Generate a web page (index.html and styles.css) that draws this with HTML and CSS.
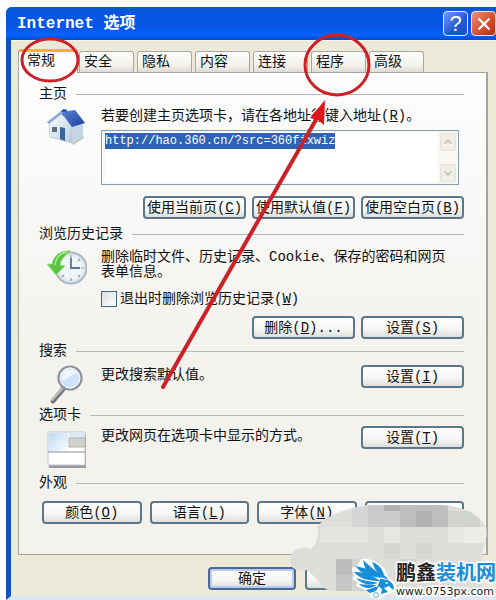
FILE: index.html
```html
<!DOCTYPE html>
<html lang="zh-CN">
<head>
    <meta charset="UTF-8">
    <meta name="viewport" content="width=device-width, initial-scale=1.0">
    <title>Internet 选项</title>
    <link rel="stylesheet" href="styles.css">
</head>
<body>
    <div class="window">
        <div class="titlebar">
            <h1>Internet 选项</h1>
            <button class="title-button help" aria-label="帮助">?</button>
            <button class="title-button close" aria-label="关闭">
                <svg width="14" height="14" viewBox="0 0 14 14"><path d="M1.5 1.5l11 11M12.5 1.5l-11 11" stroke="#fff" stroke-width="2.4"/></svg>
            </button>
        </div>

        <div class="content">
            <div class="tabs">
                <button class="tab active">常规</button>
                <button class="tab">安全</button>
                <button class="tab">隐私</button>
                <button class="tab">内容</button>
                <button class="tab">连接</button>
                <button class="tab">程序</button>
                <button class="tab">高级</button>
            </div>

            <div class="panel">
                <!-- Home page -->
                <h2>主页</h2>
                <div class="row">
                    <div class="icon">
                        <svg width="40" height="38" viewBox="0 0 40 38">
                            <defs>
                                <linearGradient id="roof" x1="0" y1="0" x2="1" y2="1">
                                    <stop offset="0" stop-color="#5b86dc"/>
                                    <stop offset="1" stop-color="#1a3c9c"/>
                                </linearGradient>
                                <linearGradient id="wall" x1="0" y1="0" x2="1" y2="1">
                                    <stop offset="0" stop-color="#ffffff"/>
                                    <stop offset="1" stop-color="#b9cbdd"/>
                                </linearGradient>
                            </defs>
                            <path d="M14 3l3-2 3 1v6h-6z" fill="#27499b"/>
                            <path d="M2 15L14 5l11 14v16L3 29z" fill="url(#wall)" stroke="#a9b8c8" stroke-width=".6"/>
                            <path d="M25 18l11-2v12l-11 7z" fill="#c6d5e3"/>
                            <path d="M14 4l14-2 10 13-13 4z" fill="url(#roof)"/>
                            <path d="M0 14L14 3l2 2L2 16z" fill="#8ea9d2"/>
                            <path d="M13 19l5 1v13l-5-2z" fill="#3b6498"/>
                            <path d="M5 19h5v5H5z" fill="#5a6f83"/>
                            <path d="M25 35l11-7 1 2-11 7z" fill="#bccbb9"/>
                        </svg>
                    </div>
                    <div class="fields">
                        <label for="homepage">若要创建主页选项卡，请在各地址行键入地址(<u>R</u>)。</label>
                        <div class="address">
                            <textarea id="homepage" spellcheck="false">http://hao.360.cn/?src=360fixwiz</textarea>
                            <div class="scrollbar">
                                <svg viewBox="0 0 16 16"><path d="M4 10l4-4 4 4" fill="none" stroke="#c4c3b8" stroke-width="2"/></svg>
                                <svg viewBox="0 0 16 16"><path d="M4 6l4 4 4-4" fill="none" stroke="#c4c3b8" stroke-width="2"/></svg>
                            </div>
                        </div>
                        <div class="actions">
                            <button class="button">使用当前页(<u>C</u>)</button>
                            <button class="button">使用默认值(<u>F</u>)</button>
                            <button class="button">使用空白页(<u>B</u>)</button>
                        </div>
                    </div>
                </div>

                <!-- History -->
                <h2>浏览历史记录</h2>
                <div class="row history">
                    <div class="icon">
                        <svg width="40" height="36" viewBox="0 0 40 36">
                            <circle cx="24" cy="18" r="15.5" fill="#dfe8ef" stroke="#aeb7bd" stroke-width="2"/>
                            <circle cx="24" cy="18" r="12" fill="#eef4f8"/>
                            <path d="M24 5v3M37 18h-3M24 31v-3M33 9l-2 2M33 27l-2-2M15 27l2-2" stroke="#8c98a4" stroke-width="1.2"/>
                            <path d="M24 8v10h9" fill="none" stroke="#5f7389" stroke-width="1.8"/>
                            <path d="M24 1C14 0 7 5 5 14H0l9 11 9-9-5-1c1-6 5-10 11-14z" fill="#58c63c" stroke="#a3dd92" stroke-width=".8"/>
                            <path d="M20 2C13 3 9 8 8 15" fill="none" stroke="#a5ea8d" stroke-width="1.5"/>
                        </svg>
                    </div>
                    <div class="fields">
                        <p>删除临时文件、历史记录、Cookie、保存的密码和网页表单信息。</p>
                        <label class="check"><input type="checkbox">退出时删除浏览历史记录(<u>W</u>)</label>
                        <div class="actions">
                            <button class="button">删除(<u>D</u>)...</button>
                            <button class="button">设置(<u>S</u>)</button>
                        </div>
                    </div>
                </div>

                <!-- Search -->
                <h2>搜索</h2>
                <div class="row short">
                    <div class="icon">
                        <svg width="40" height="40" viewBox="0 0 40 40">
                            <path d="M17 23L6 36" stroke="#77777a" stroke-width="5" stroke-linecap="round"/>
                            <path d="M16 23L5 35" stroke="#c2c2c5" stroke-width="2" stroke-linecap="round"/>
                            <circle cx="23" cy="13" r="11.5" fill="#cfe4fb" stroke="#8d929a" stroke-width="2.2"/>
                            <circle cx="23" cy="13" r="9.8" fill="none" stroke="#eef5fc" stroke-width="1.2"/>
                            <path d="M15 15c6-1 9-5 15-7-3-5-13-5-15 2z" fill="#edf6ff"/>
                        </svg>
                    </div>
                    <p>更改搜索默认值。</p>
                    <button class="button">设置(<u>I</u>)</button>
                </div>

                <!-- Tabs -->
                <h2>选项卡</h2>
                <div class="row short last">
                    <div class="icon">
                        <svg width="40" height="42" viewBox="0 -4 40 42">
                            <defs>
                                <linearGradient id="page" x1="0" y1="0" x2="1" y2="1">
                                    <stop offset="0" stop-color="#bcd8f7"/>
                                    <stop offset="1" stop-color="#ffffff"/>
                                </linearGradient>
                            </defs>
                            <path d="M2 4h37v34H2z" fill="#9b9b9b"/>
                            <path d="M1 2h37v33H1z" fill="#fff" stroke="#c3c7cd"/>
                            <path d="M2 3h19v19H2z" fill="url(#page)"/>
                            <path d="M22 3h16v5H22z" fill="#dbe9f7"/>
                            <path d="M22 8h16v9H22z" fill="#d1d1cd" stroke="#b4b4b1"/>
                            <path d="M1 22h37" stroke="#8e939b"/>
                        </svg>
                    </div>
                    <p>更改网页在选项卡中显示的方式。</p>
                    <button class="button">设置(<u>T</u>)</button>
                </div>

                <!-- Appearance -->
                <h2>外观</h2>
                <div class="appearance">
                    <button class="button">颜色(<u>O</u>)</button>
                    <button class="button">语言(<u>L</u>)</button>
                    <button class="button">字体(<u>N</u>)</button>
                    <button class="button">辅助功能(<u>E</u>)</button>
                </div>
            </div>

            <div class="footer">
                <button class="button default">确定</button>
                <button class="button">取消</button>
            </div>
        </div>

        <!-- Red marks over the tabs -->
        <svg class="marks" width="400" height="400" viewBox="0 0 400 400">
            <g fill="none" stroke="#cb2127">
                <ellipse cx="50" cy="60" rx="28" ry="21" stroke-width="3"/>
                <ellipse cx="337" cy="65" rx="32" ry="30" stroke-width="3"/>
                <path d="M163 387L317 118" stroke-width="4" stroke-linecap="round"/>
            </g>
            <path d="M325 100l-15 18 8 2 6 5z" fill="#e0161c"/>
        </svg>

        <!-- Mosaic and site logo -->
        <svg class="mosaic" width="208" height="98" viewBox="288 502 208 98">
            <defs>
                <clipPath id="cloud">
                    <path d="M316 527Q328 515 346 510T372 505H440C462 506 478 513 486 527Q488 540 482 552V591H330Q321 588 319 581L307 570Q297 572 292 567Q287 556 295 550Q303 546 311 549Q319 542 318 530z"/>
                </clipPath>
            </defs>
            <g clip-path="url(#cloud)">
                <path d="M288 502h208v98H288z" fill="#dddeda"/>
                <path d="M352 502h16v25h-16z" fill="#d3d6d4"/>
                <path d="M368 502h16v25h-16z" fill="#c9cbc9"/>
                <path d="M384 502h16v9h-16z" fill="#aeb1af"/>
                <path d="M384 511h16v16h-16z" fill="#cccdcb"/>
                <path d="M400 502h48v25h-48z" fill="#bdbfbd"/>
                <path d="M416 511h16v16h-16z" fill="#afb2b0"/>
                <path d="M448 511h32v16h-32z" fill="#d1d3cf"/>
                <path d="M320 527h48v16h-48z" fill="#e5e5e2"/>
                <path d="M384 527h16v16h-16zM448 527h16v16h-16z" fill="#e6e6e3"/>
                <path d="M464 527h32v16h-32z" fill="#ecece9"/>
                <path d="M384 543h16v16h-16zM416 543h16v16h-16z" fill="#d5d7d2"/>
                <path d="M400 559h16v16h-16z" fill="#d0d1cd"/>
                <path d="M336 559h16v16h-16z" fill="#bcbcba"/>
                <path d="M336 575h16v16h-16z" fill="#c6c6c4"/>
                <path d="M352 559h16v32h-16z" fill="#d2d4d1"/>
            </g>
        </svg>
        <div class="logo">
            <svg width="44" height="40" viewBox="0 0 44 40">
                <path d="M11 0l12 4 8 6 5 10 7 6-1 6-8 2-8 5-6-2-2-6-12-5 3-2-7-5 3-1-4-8 4-1z" fill="#fff" stroke="#fff" stroke-width="3" stroke-linejoin="round"/>
                <g fill="#178ed6">
                    <path d="M11 1l9 8 8 6 2 4-9-3-8-7z"/>
                    <path d="M20 3c6 2 10 6 12 13l5 5-8-3-6-8z"/>
                    <path d="M3 7l13 3 13 9-11-2-9-4z"/>
                    <path d="M2 13c9 0 17 2 26 9-11 0-20-2-26-9z"/>
                    <path d="M4 19c8 3 14 3 22 5-8 3-17 1-22-5z"/>
                    <path d="M7 25c6 1 10 0 17 1-4 4-12 4-17-1z"/>
                    <path d="M14 31c5-1 8-3 13-4l-3 5-6 2z"/>
                    <path d="M28 20c7 0 12 2 14 8l-1 3-4-4-5 2 4 4-7 2 1-5-4-3z"/>
                </g>
                <path d="M33 23l4 1-3 1z" fill="#fff"/>
                <circle cx="24" cy="36" r="2.5" fill="none" stroke="#5ab3e4"/>
            </svg>
            <div class="logo-text">
                <div class="logo-name">鹏鑫<span>装机网</span></div>
                <div class="logo-url">www.0753px.com</div>
            </div>
        </div>
    </div>
</body>
</html>
```
FILE: styles.css
```css
* {
    margin: 0;
    padding: 0;
    box-sizing: border-box;
}

body {
    background-color: #fff;
    padding: 7px 0 0 6px;
    overflow: hidden;
}

body, button, textarea {
    font-family: 'Liberation Mono', 'Noto Sans CJK SC', monospace;
    font-size: 14px;
    line-height: 16px;
    color: #111;
}

.window {
    background-color: #ece9d8;
    border-left: 5px solid #1450c0;
    border-bottom: 4px solid #dce6f8;
    border-top-left-radius: 6px;
}

.titlebar {
    height: 33px;
    margin-left: -5px;
    padding-left: 11px;
    display: flex;
    align-items: center;
    gap: 3px;
    background: linear-gradient(#0a56cc, #0457e2 20%, #0554e4 60%, #0763ff 85%, #0349cc);
    border-top-left-radius: 6px;
    overflow: hidden;
}

h1 {
    flex: 1;
    color: #fff;
    font-size: 16px;
    line-height: 24px;
}

.title-button {
    width: 25px;
    height: 25px;
    display: flex;
    justify-content: center;
    align-items: center;
    border: 1px solid #dfe9fb;
    border-radius: 4px;
}

.help {
    background: linear-gradient(135deg, #6f9bf3, #2258d5 60%, #1c4fc4);
    color: #fff;
    font: 22px 'Liberation Sans', sans-serif;
}

.close {
    background: linear-gradient(135deg, #eb9377, #d9482a 60%, #b62c10);
}

.content {
    padding: 8px 8px 6px 7px;
    border-top: 1px solid #f8f6ee;
}

.tabs {
    display: flex;
    align-items: flex-end;
    gap: 3px;
}

.tab {
    width: 55px;
    height: 21px;
    padding-left: 4px;
    text-align: left;
    border: 1px solid #a5a9a5;
    border-bottom: none;
    border-radius: 3px 3px 0 0;
    background: linear-gradient(#fff, #f1f0ea 70%, #dedcd2);
}

.tab.active {
    position: relative;
    width: 60px;
    height: 24px;
    padding: 0 0 3px 8px;
    margin: 0 -2px -1px 0;
    border-top: 3px solid #f0b040;
    background: #fdfdfe;
}

.panel {
    padding: 13px 22px 30px 20px;
    border: 1px solid #a3a59f;
    border-right-width: 2px;
    background: linear-gradient(#fdfdfe, #f3f2ed 60%);
}

h2 {
    display: flex;
    align-items: center;
    gap: 9px;
    font-size: 14px;
    font-weight: normal;
    line-height: 16px;
}

h2::after {
    content: '';
    flex: 1;
    height: 1px;
    background-color: #b5b7b3;
}

.row {
    display: flex;
    align-items: flex-start;
    padding: 6px 0 7px;
}

.icon {
    width: 62px;
    padding-left: 8px;
    flex-shrink: 0;
}

.icon svg {
    display: block;
}

.fields {
    flex: 1;
}

label {
    display: block;
}

.address {
    position: relative;
    margin: 6px 5px 11px 0;
}

/* the blue band is the selected address */
textarea {
    display: block;
    width: 100%;
    height: 55px;
    padding: 2px 3px;
    border: 1px solid #8b9cab;
    border-radius: 0;
    font-size: 12px;
    color: #fff;
    resize: none;
    outline: none;
    overflow: hidden;
    background: linear-gradient(#2f63b5, #2f63b5) no-repeat content-box #fff;
    background-size: 32ch 16px;
}

.scrollbar {
    position: absolute;
    top: 1px;
    right: 1px;
    bottom: 1px;
    width: 20px;
    padding: 2px;
    display: flex;
    flex-direction: column;
    justify-content: space-between;
    background-color: #f8f7f1;
}

.scrollbar svg {
    width: 16px;
    height: 18px;
    border: 1px solid #e6e4d8;
    border-radius: 2px;
    background-color: #f0efe6;
}

.button {
    width: 103px;
    height: 23px;
    white-space: nowrap;
    border: 2px solid #5c7888;
    border-radius: 4px;
    background: linear-gradient(#fff, #f5f6f3 60%, #dcdfdc);
}

.button:active {
    filter: brightness(92%);
}

.button.default {
    border-color: #4c6894;
    box-shadow: inset 0 0 0 2px #b5cbf0;
}

.actions {
    display: flex;
    justify-content: flex-end;
    gap: 6px;
}

.row.history {
    padding: 8px 0 4px;
}

.history p {
    line-height: 15px;
    padding-right: 16px;
}

.check {
    display: flex;
    align-items: center;
    margin: 11px 0 9px;
}

.check input {
    appearance: none;
    width: 16px;
    height: 16px;
    margin-right: 3px;
    border: 1px solid #426580;
    background: linear-gradient(135deg, #dcdfdf, #fff);
}

.row.short {
    height: 48px;
    padding-top: 6px;
    padding-bottom: 0;
}

.row.last {
    height: 52px;
    padding-top: 3px;
}

.short p {
    flex: 1;
    line-height: 20px;
}

.appearance {
    display: flex;
    gap: 8px;
    padding: 10px 0 0 3px;
}

.appearance .button {
    flex: 1;
    min-width: 0;
}

.footer {
    display: flex;
    gap: 9px;
    padding: 12px 0 0 190px;
}

.footer .button {
    width: 88px;
}

.marks {
    position: absolute;
    top: 0;
    left: 0;
    pointer-events: none;
}

.mosaic {
    position: absolute;
    top: 502px;
    right: 0;
}

.logo {
    position: absolute;
    top: 559px;
    right: 0;
    display: flex;
    color: #222;
    -webkit-text-stroke: 3px #fff;
    paint-order: stroke fill;
}

.logo-name {
    font-family: 'Noto Sans CJK SC', sans-serif;
    font-size: 20px;
    font-weight: bold;
    line-height: 26px;
}

.logo-name span {
    color: #178ed6;
}

.logo-url {
    font-family: 'DejaVu Sans', sans-serif;
    font-size: 11px;
    line-height: 13px;
}
```
